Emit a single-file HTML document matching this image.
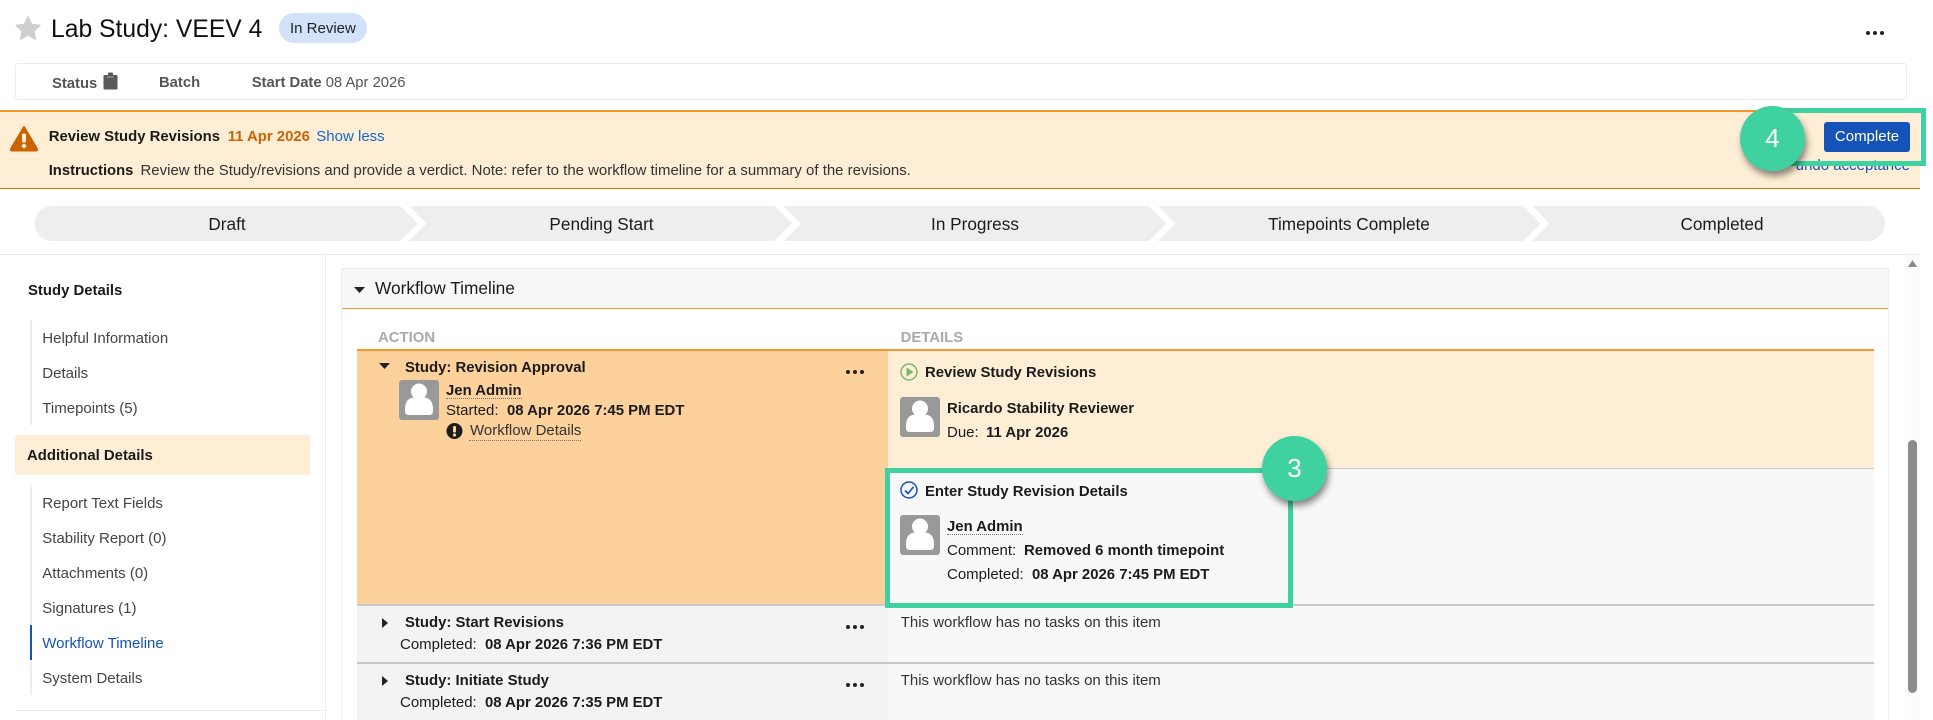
<!DOCTYPE html>
<html><head><meta charset="utf-8"><title>Lab Study</title>
<style>
html,body{margin:0;padding:0;background:#fff}
body{width:1933px;height:720px;position:relative;overflow:hidden;font-family:"Liberation Sans",Arial,sans-serif;font-size:15px;color:#1b1b1b}
.t{position:absolute;white-space:nowrap;line-height:20px;margin-top:1px}
.b{font-weight:700;font-size:14.9px}
.r{position:absolute}
.d{position:absolute;width:4.5px;height:4.5px;border-radius:50%;background:#222}
svg{position:absolute;overflow:visible}
.u{position:absolute;border-bottom:1px dotted #777;height:0}
.side{color:#444}
.s{font-size:17.2px;text-align:center;width:200px;top:212.5px}
</style></head><body>

<!-- header -->
<svg style="left:15px;top:16px" width="26" height="24" viewBox="0 0 26 24"><path d="M13 1 L16.6 8.4 L24.8 9.4 L18.8 15 L20.4 23 L13 19 L5.6 23 L7.2 15 L1.2 9.4 L9.4 8.4 Z" fill="#cfcfcf" stroke="#cfcfcf" stroke-linejoin="round" stroke-width="1.5"/></svg>
<div class="t" style="left:51px;top:15px;font-size:24.7px;line-height:28px;color:#111">Lab Study: VEEV 4</div>
<div class="r" style="left:279px;top:13px;width:88px;height:30px;border-radius:15px;background:#d2e2fa"></div>
<div class="t" style="left:290px;top:18px;color:#222">In Review</div>
<div class="d" style="left:1865.5px;top:30.5px"></div><div class="d" style="left:1872.5px;top:30.5px"></div><div class="d" style="left:1879.5px;top:30.5px"></div>

<div class="r" style="left:15px;top:63px;width:1890px;height:35px;border:1px solid #ececec;border-radius:3px"></div>
<div class="t b" style="left:52px;top:72.5px;color:#555;font-size:14.8px">Status</div>
<svg style="left:103px;top:72px" width="15" height="18" viewBox="0 0 15 18"><path d="M1.5 3 H5 V1.5 Q5 0.5 6 0.5 H9 Q10 0.5 10 1.5 V3 H13.5 Q14.5 3 14.5 4 V16.5 Q14.5 17.5 13.5 17.5 H1.5 Q0.5 17.5 0.5 16.5 V4 Q0.5 3 1.5 3 Z" fill="#5a5a5a"/><rect x="4" y="4.5" width="7" height="1" fill="#aaa"/></svg>
<div class="t b" style="left:159px;top:71.5px;color:#555;font-size:14.8px">Batch</div>
<div class="t b" style="left:251.7px;top:71.5px;color:#555;font-size:14.8px">Start Date</div>
<div class="t" style="left:325.7px;top:71.5px;color:#555;font-size:14.8px">08 Apr 2026</div>

<!-- banner -->
<div class="r" style="left:0;top:110px;width:1920px;height:76px;background:#feeed6;border-top:2px solid #f7962c;border-bottom:1px solid #d96b00"></div>
<svg style="left:9px;top:125px" width="30" height="27" viewBox="0 0 30 27"><path d="M15 2 L28 24 Q28.5 25.5 27 25.5 H3 Q1.5 25.5 2 24 Z" fill="#cb6400" stroke="#cb6400" stroke-width="2" stroke-linejoin="round"/><rect x="13" y="8.5" width="4" height="9" rx="1.5" fill="#feeed6"/><circle cx="15" cy="21" r="2.2" fill="#feeed6"/></svg>
<div class="t b" style="left:48.7px;top:125.5px;color:#1a1a1a">Review Study Revisions</div>
<div class="t b" style="left:227.7px;top:125.5px;color:#cb6400">11 Apr 2026</div>
<div class="t" style="left:316.3px;top:125.5px;color:#1268cc">Show less</div>
<div class="t b" style="left:48.7px;top:159.5px;color:#1a1a1a;font-size:14.8px">Instructions</div>
<div class="t" style="left:140.5px;top:159.5px;color:#333;font-size:14.98px">Review the Study/revisions and provide a verdict. Note: refer to the workflow timeline for a summary of the revisions.</div>

<div class="t" style="right:23px;top:155px;color:#1553b8">undo acceptance</div>
<div class="r" style="left:1772px;top:108px;width:144px;height:48px;border:5px solid #40d1a0"></div>
<div class="r" style="left:1824px;top:122px;width:86px;height:30px;background:#1553b8;border-radius:3px"></div>
<div class="t" style="left:1824px;top:126px;width:86px;text-align:center;color:#fff">Complete</div>
<div class="r" style="left:1740px;top:106px;width:65px;height:65px;border-radius:50%;background:#40d1a0;box-shadow:2px 5px 7px rgba(0,0,0,.45)"></div>
<div class="t" style="left:1740px;top:121.5px;width:65px;text-align:center;color:#fff;font-size:26px;line-height:30px">4</div>

<!-- steps -->
<svg style="left:0;top:206px" width="1933" height="35" viewBox="0 0 1933 35">
<path d="M52 0 H400 L418 17.5 L400 35 H52 A17.5 17.5 0 0 1 52 0 Z" fill="#eee"/>
<path d="M409 0 H774.5 L792 17.5 L774.5 35 H409 L426.5 17.5 Z" fill="#eee"/>
<path d="M783.5 0 H1149 L1166.5 17.5 L1149 35 H783.5 L801 17.5 Z" fill="#eee"/>
<path d="M1158 0 H1523 L1540.5 17.5 L1523 35 H1158 L1175.5 17.5 Z" fill="#eee"/>
<path d="M1532 0 H1867.5 A17.5 17.5 0 0 1 1867.5 35 H1532 L1549.5 17.5 Z" fill="#eee"/>
</svg>
<div class="t s" style="left:127px">Draft</div>
<div class="t s" style="left:501.5px">Pending Start</div>
<div class="t s" style="left:875px">In Progress</div>
<div class="t s" style="left:1249px">Timepoints Complete</div>
<div class="t s" style="left:1622px">Completed</div>

<div class="r" style="left:0;top:254px;width:1920px;height:1px;background:#ececec"></div>
<div class="r" style="left:325px;top:255px;width:1px;height:465px;background:#ececec"></div>

<!-- sidebar -->
<div class="t b" style="left:28px;top:280px;color:#1a1a1a">Study Details</div>
<div class="r" style="left:30px;top:320px;width:2px;height:105px;background:#eee"></div>
<div class="t side" style="left:42.3px;top:328px">Helpful Information</div>
<div class="t side" style="left:42.3px;top:363px">Details</div>
<div class="t side" style="left:42.3px;top:398px">Timepoints (5)</div>
<div class="r" style="left:15px;top:435px;width:295px;height:40px;background:#feeed6;border-radius:2px"></div>
<div class="t b" style="left:27px;top:445px;color:#1a1a1a">Additional Details</div>
<div class="r" style="left:30px;top:485px;width:2px;height:210px;background:#eee"></div>
<div class="t side" style="left:42.3px;top:493px">Report Text Fields</div>
<div class="t side" style="left:42.3px;top:528px">Stability Report (0)</div>
<div class="t side" style="left:42.3px;top:563px">Attachments (0)</div>
<div class="t side" style="left:42.3px;top:598px">Signatures (1)</div>
<div class="r" style="left:30px;top:625px;width:2px;height:35px;background:#1553b8"></div>
<div class="t" style="left:42.3px;top:633px;color:#1553b8">Workflow Timeline</div>
<div class="t side" style="left:42.3px;top:668px">System Details</div>
<div class="r" style="left:15px;top:710px;width:310px;height:1px;background:#ececec"></div>

<!-- panel -->
<div class="r" style="left:341px;top:268px;width:1548px;height:452px;border-left:1px solid #eee;border-right:1px solid #eee;border-top:1px solid #eee;box-sizing:border-box"></div>
<div class="r" style="left:342px;top:269px;width:1546px;height:39px;background:#f7f7f7;border-bottom:1px solid #f7962c"></div>
<svg style="left:354px;top:287px" width="11" height="6" viewBox="0 0 11 6"><path d="M0 0 H11 L5.5 6 Z" fill="#222"/></svg>
<div class="t" style="left:375px;top:277px;font-size:17.3px">Workflow Timeline</div>
<div class="t b" style="left:378px;top:327px;color:#aaa">ACTION</div>
<div class="t b" style="left:900.6px;top:327px;color:#aaa">DETAILS</div>

<div class="r" style="left:357px;top:349px;width:1517px;height:2px;background:#f7962c"></div>
<div class="r" style="left:357px;top:351px;width:531px;height:253px;background:#fcd19b"></div>
<div class="r" style="left:888px;top:351px;width:986px;height:117px;background:#feeed6"></div>
<div class="r" style="left:888px;top:468px;width:986px;height:136px;background:#f8f8f8;border-top:1px solid #ccc;box-sizing:border-box"></div>
<div class="r" style="left:357px;top:604px;width:1517px;height:2px;background:#c8c8c8"></div>
<div class="r" style="left:357px;top:606px;width:531px;height:56px;background:#f3f3f3"></div>
<div class="r" style="left:888px;top:606px;width:986px;height:56px;background:#f8f8f8"></div>
<div class="r" style="left:357px;top:662px;width:1517px;height:2px;background:#c8c8c8"></div>
<div class="r" style="left:357px;top:664px;width:531px;height:56px;background:#f3f3f3"></div>
<div class="r" style="left:888px;top:664px;width:986px;height:56px;background:#f8f8f8"></div>

<!-- row 1 action -->
<svg style="left:379px;top:363px" width="11" height="6" viewBox="0 0 11 6"><path d="M0 0 H11 L5.5 6 Z" fill="#222"/></svg>
<div class="t b" style="left:405px;top:357px">Study: Revision Approval</div>
<div class="d" style="left:845.5px;top:369.5px"></div><div class="d" style="left:852.5px;top:369.5px"></div><div class="d" style="left:859.5px;top:369.5px"></div>
<svg style="left:399px;top:380px" width="40" height="40" viewBox="0 0 40 40"><rect width="40" height="40" rx="3" fill="#999"/><circle cx="20" cy="11.5" r="8" fill="#fff"/><path d="M6 29 Q6 19 14 17.5 Q20 21 26 17.5 Q34 19 34 29 V31 Q34 35 30 35 H10 Q6 35 6 31 Z" fill="#fff"/></svg>
<div class="t b" style="left:446px;top:380px">Jen Admin</div>
<div class="u" style="left:446px;top:398px;width:76px"></div>
<div class="t" style="left:446px;top:400px">Started:</div>
<div class="t b" style="left:507px;top:400px">08 Apr 2026 7:45 PM EDT</div>
<svg style="left:446px;top:423px" width="17" height="16" viewBox="0 0 17 16"><circle cx="8.5" cy="8" r="8" fill="#1c1c1c"/><rect x="7" y="3" width="3" height="6.5" rx="1" fill="#fcd19b"/><circle cx="8.5" cy="12" r="1.6" fill="#fcd19b"/></svg>
<div class="t" style="left:470px;top:420px;color:#333">Workflow Details</div>
<div class="u" style="left:469px;top:440px;width:112px"></div>

<!-- row 1 details -->
<svg style="left:900px;top:363px" width="18" height="18" viewBox="0 0 18 18"><circle cx="9" cy="9" r="8" fill="none" stroke="#7ab56f" stroke-width="1.5"/><path d="M6.5 4.5 L13.5 9 L6.5 13.5 Z" fill="#7ab56f"/></svg>
<div class="t b" style="left:925px;top:362px">Review Study Revisions</div>
<svg style="left:900px;top:397px" width="40" height="40" viewBox="0 0 40 40"><rect width="40" height="40" rx="3" fill="#999"/><circle cx="20" cy="11.5" r="8" fill="#fff"/><path d="M6 29 Q6 19 14 17.5 Q20 21 26 17.5 Q34 19 34 29 V31 Q34 35 30 35 H10 Q6 35 6 31 Z" fill="#fff"/></svg>
<div class="t b" style="left:947px;top:398px">Ricardo Stability Reviewer</div>
<div class="t" style="left:947px;top:422px">Due:</div>
<div class="t b" style="left:986px;top:422px">11 Apr 2026</div>

<svg style="left:900px;top:481px" width="18" height="18" viewBox="0 0 18 18"><circle cx="9" cy="9" r="8" fill="none" stroke="#1553b8" stroke-width="1.5"/><path d="M5 9.5 L8 12.5 L13.5 6" fill="none" stroke="#1553b8" stroke-width="1.7"/></svg>
<div class="t b" style="left:925px;top:481px">Enter Study Revision Details</div>
<svg style="left:900px;top:515px" width="40" height="40" viewBox="0 0 40 40"><rect width="40" height="40" rx="3" fill="#999"/><circle cx="20" cy="11.5" r="8" fill="#fff"/><path d="M6 29 Q6 19 14 17.5 Q20 21 26 17.5 Q34 19 34 29 V31 Q34 35 30 35 H10 Q6 35 6 31 Z" fill="#fff"/></svg>
<div class="t b" style="left:947px;top:516px">Jen Admin</div>
<div class="u" style="left:947px;top:534px;width:76px"></div>
<div class="t" style="left:947px;top:540px">Comment:</div>
<div class="t b" style="left:1024px;top:540px">Removed 6 month timepoint</div>
<div class="t" style="left:947px;top:564px">Completed:</div>
<div class="t b" style="left:1032px;top:564px">08 Apr 2026 7:45 PM EDT</div>

<!-- row 2 -->
<svg style="left:382px;top:618px" width="6" height="10" viewBox="0 0 6 10"><path d="M0 0 L6 5 L0 10 Z" fill="#222"/></svg>
<div class="t b" style="left:405px;top:612px">Study: Start Revisions</div>
<div class="t" style="left:400px;top:634px">Completed:</div>
<div class="t b" style="left:485px;top:634px">08 Apr 2026 7:36 PM EDT</div>
<div class="d" style="left:845.5px;top:624.5px"></div><div class="d" style="left:852.5px;top:624.5px"></div><div class="d" style="left:859.5px;top:624.5px"></div>
<div class="t" style="left:900.7px;top:612px;color:#333">This workflow has no tasks on this item</div>

<!-- row 3 -->
<svg style="left:382px;top:676px" width="6" height="10" viewBox="0 0 6 10"><path d="M0 0 L6 5 L0 10 Z" fill="#222"/></svg>
<div class="t b" style="left:405px;top:670px">Study: Initiate Study</div>
<div class="t" style="left:400px;top:692px">Completed:</div>
<div class="t b" style="left:485px;top:692px">08 Apr 2026 7:35 PM EDT</div>
<div class="d" style="left:845.5px;top:682.5px"></div><div class="d" style="left:852.5px;top:682.5px"></div><div class="d" style="left:859.5px;top:682.5px"></div>
<div class="t" style="left:900.7px;top:670px;color:#333">This workflow has no tasks on this item</div>

<!-- annotation 3 -->
<div class="r" style="left:885px;top:468px;width:408px;height:140px;border:5px solid #40d1a0;box-sizing:border-box"></div>
<div class="r" style="left:1262px;top:436px;width:65px;height:65px;border-radius:50%;background:#40d1a0;box-shadow:2px 5px 7px rgba(0,0,0,.45)"></div>
<div class="t" style="left:1262px;top:452px;width:65px;text-align:center;color:#fff;font-size:26px;line-height:30px">3</div>

<!-- scrollbar -->
<div class="r" style="left:1905px;top:255px;width:15px;height:465px;background:#fcfcfc"></div>
<svg style="left:1908px;top:260px" width="9" height="7" viewBox="0 0 9 7"><path d="M4.5 0 L9 7 H0 Z" fill="#888"/></svg>
<div class="r" style="left:1908px;top:440px;width:9px;height:253px;border-radius:4.5px;background:#8c8c8c"></div>
</body></html>
